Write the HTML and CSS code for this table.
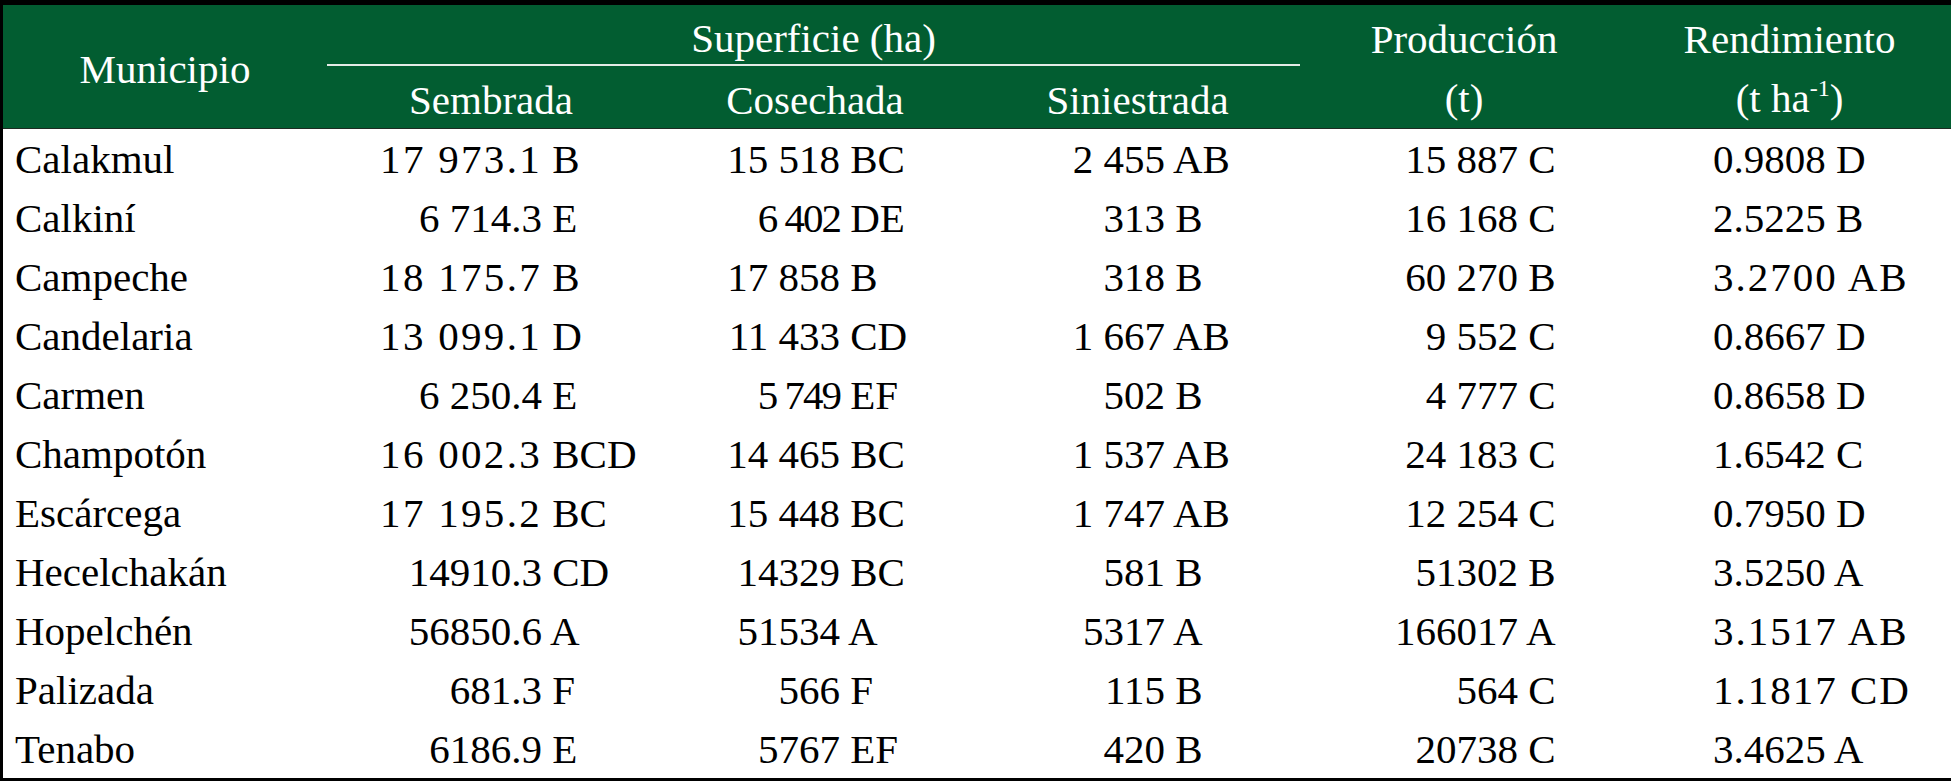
FILE: index.html
```html
<!DOCTYPE html>
<html lang="es">
<head>
<meta charset="utf-8">
<title>Superficie, producción y rendimiento por municipio</title>
<link rel="stylesheet" href="styles.css">
</head>
<body>
<table class="tbl">
  <colgroup>
    <col class="c-mun"><col class="c-sem"><col class="c-cos"><col class="c-sin"><col class="c-pro"><col class="c-ren">
  </colgroup>
  <thead>
    <tr class="h1">
      <th rowspan="2" class="mun">Municipio</th>
      <th colspan="3" class="sup">Superficie (ha)</th>
      <th rowspan="2" class="two">Producción<br>(t)</th>
      <th rowspan="2" class="two">Rendimiento<br>(t ha<sup class="exp">-1</sup>)</th>
    </tr>
    <tr class="h2">
      <th>Sembrada</th>
      <th>Cosechada</th>
      <th>Siniestrada</th>
    </tr>
  </thead>
  <tbody>
    <tr><td class="name">Calakmul</td><td class="sem"><span class="n wide">17 973.1</span> B</td><td class="cos"><span class="n">15 518</span> BC</td><td class="sin"><span class="n">2 455</span> AB</td><td class="pro"><span class="n">15 887</span> C</td><td class="ren">0.9808 D</td></tr>
    <tr><td class="name">Calkiní</td><td class="sem"><span class="n">6 714.3</span> E</td><td class="cos"><span class="n tight">6 402</span> DE</td><td class="sin"><span class="n">313</span> B</td><td class="pro"><span class="n">16 168</span> C</td><td class="ren">2.5225 B</td></tr>
    <tr><td class="name">Campeche</td><td class="sem"><span class="n wide">18 175.7</span> B</td><td class="cos"><span class="n">17 858</span> B</td><td class="sin"><span class="n">318</span> B</td><td class="pro"><span class="n">60 270</span> B</td><td class="ren spread">3.2700 AB</td></tr>
    <tr><td class="name">Candelaria</td><td class="sem"><span class="n wide">13 099.1</span> D</td><td class="cos"><span class="n">11 433</span> CD</td><td class="sin"><span class="n">1 667</span> AB</td><td class="pro"><span class="n">9 552</span> C</td><td class="ren">0.8667 D</td></tr>
    <tr><td class="name">Carmen</td><td class="sem"><span class="n">6 250.4</span> E</td><td class="cos"><span class="n tight">5 749</span> EF</td><td class="sin"><span class="n">502</span> B</td><td class="pro"><span class="n">4 777</span> C</td><td class="ren">0.8658 D</td></tr>
    <tr><td class="name">Champotón</td><td class="sem"><span class="n wide">16 002.3</span> BCD</td><td class="cos"><span class="n">14 465</span> BC</td><td class="sin"><span class="n">1 537</span> AB</td><td class="pro"><span class="n">24 183</span> C</td><td class="ren">1.6542 C</td></tr>
    <tr><td class="name">Escárcega</td><td class="sem"><span class="n wide">17 195.2</span> BC</td><td class="cos"><span class="n">15 448</span> BC</td><td class="sin"><span class="n">1 747</span> AB</td><td class="pro"><span class="n">12 254</span> C</td><td class="ren">0.7950 D</td></tr>
    <tr><td class="name">Hecelchakán</td><td class="sem"><span class="n">14910.3</span> CD</td><td class="cos"><span class="n">14329</span> BC</td><td class="sin"><span class="n">581</span> B</td><td class="pro"><span class="n">51302</span> B</td><td class="ren">3.5250 A</td></tr>
    <tr><td class="name">Hopelchén</td><td class="sem"><span class="n">56850.6</span> A</td><td class="cos"><span class="n">51534</span> A</td><td class="sin"><span class="n">5317</span> A</td><td class="pro"><span class="n">166017</span> A</td><td class="ren spread">3.1517 AB</td></tr>
    <tr><td class="name">Palizada</td><td class="sem"><span class="n">681.3</span> F</td><td class="cos"><span class="n">566</span> F</td><td class="sin"><span class="n">115</span> B</td><td class="pro"><span class="n">564</span> C</td><td class="ren spread">1.1817 CD</td></tr>
    <tr><td class="name">Tenabo</td><td class="sem"><span class="n">6186.9</span> E</td><td class="cos"><span class="n">5767</span> EF</td><td class="sin"><span class="n">420</span> B</td><td class="pro"><span class="n">20738</span> C</td><td class="ren">3.4625 A</td></tr>
  </tbody>
</table>
</body>
</html>
```

FILE: styles.css
```css
html, body {
  margin: 0;
  padding: 0;
  background: #ffffff;
}

body {
  font-family: "Liberation Serif", "Times New Roman", serif;
  font-size: 41px;
  color: #000000;
}

.tbl {
  width: 1951px;
  table-layout: fixed;
  border-collapse: separate;
  border-spacing: 0;
  border-left: 3px solid #000000;
  border-top: 5px solid #000000;
  border-bottom: 5px solid #000000;
}

.c-mun { width: 324px; }
.c-sem { width: 328px; }
.c-cos { width: 320px; }
.c-sin { width: 325px; }
.c-pro { width: 328px; }
.c-ren { width: 323px; }

.tbl th {
  background: #025d31;
  color: #ffffff;
  font-weight: normal;
  padding: 0;
  text-align: center;
  white-space: nowrap;
  line-height: 46px;
}

.h1 .sup {
  height: 59px;
  border-bottom: 2px solid #e4ebe6;
  vertical-align: middle;
  padding-top: 6px;
  box-sizing: border-box;
}

.h1 .mun,
.h1 .two,
.h2 th {
  border-bottom: 1px solid #1d2b22;
}

.h1 .mun {
  padding-top: 4px;
}

.h1 .two {
  line-height: 59px;
  padding-top: 5px;
}

.h2 th {
  height: 60px;
  padding-top: 6px;
  box-sizing: border-box;
}

.exp {
  font-size: 24px;
  line-height: 0;
  vertical-align: 16px;
}

.tbl td {
  height: 59px;
  padding: 0;
  white-space: nowrap;
  line-height: 46px;
  vertical-align: middle;
}

.tbl td.name {
  padding-left: 12px;
}

.n {
  display: inline-block;
  width: 180px;
  text-align: right;
}

.n.wide {
  letter-spacing: 2.3px;
}

.n.tight {
  letter-spacing: -2px;
}

.tbl td.sem { padding-left: 35px; }
.tbl td.cos { padding-left: 5px; }
.tbl td.sin { padding-left: 10px; }
.tbl td.pro { padding-left: 38px; }
.tbl td.ren { padding-left: 85px; }

.tbl td.spread {
  letter-spacing: 2px;
}
```
